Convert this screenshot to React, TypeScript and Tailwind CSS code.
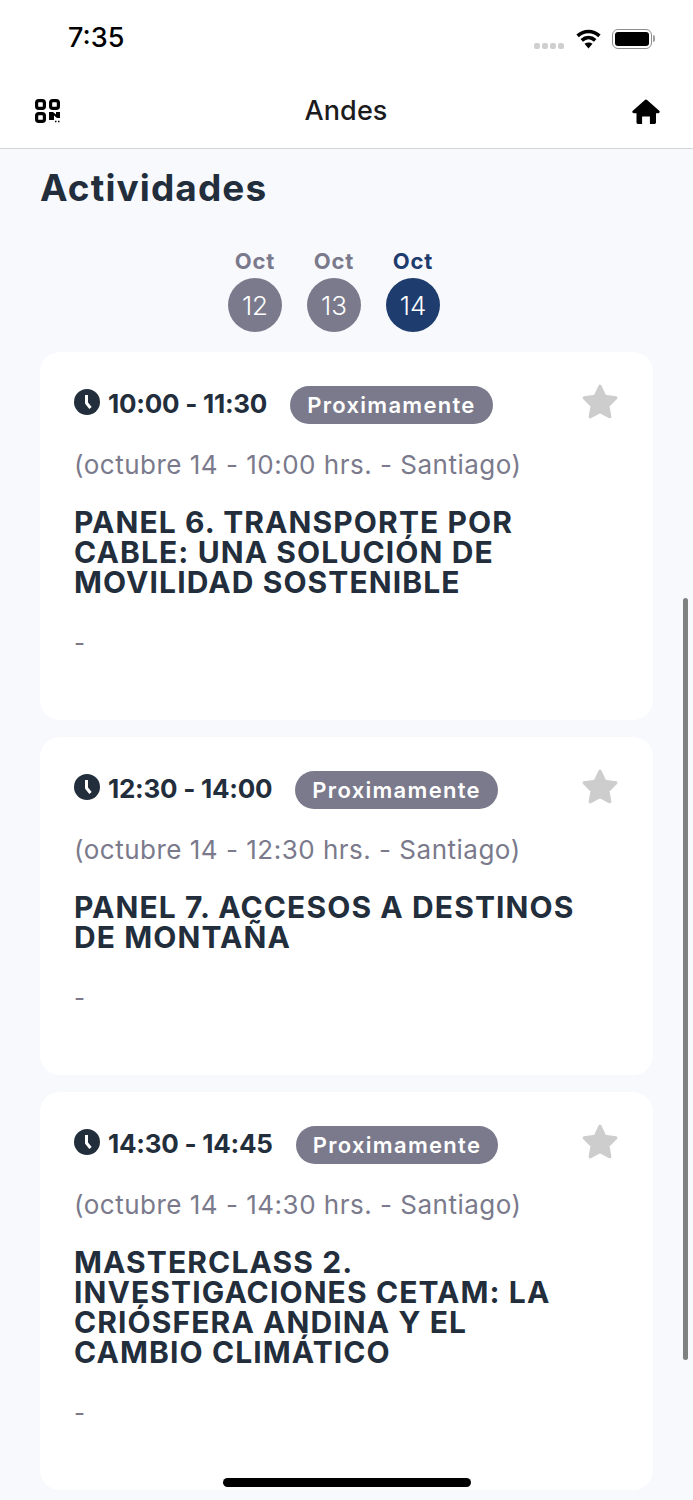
import React from 'react';

const FONT = "font-['Inter','Liberation_Sans',sans-serif]";

const days = [
  { day: '12', active: false },
  { day: '13', active: false },
  { day: '14', active: true },
];

const activities = [
  {
    time: '10:00 - 11:30',
    local: '(octubre 14 - 10:00 hrs. - Santiago)',
    title: ['PANEL 6. TRANSPORTE POR', 'CABLE: UNA SOLUCIÓN DE', 'MOVILIDAD SOSTENIBLE'],
  },
  {
    time: '12:30 - 14:00',
    local: '(octubre 14 - 12:30 hrs. - Santiago)',
    title: ['PANEL 7. ACCESOS A DESTINOS', 'DE MONTAÑA'],
  },
  {
    time: '14:30 - 14:45',
    local: '(octubre 14 - 14:30 hrs. - Santiago)',
    title: ['MASTERCLASS 2.', 'INVESTIGACIONES CETAM: LA', 'CRIÓSFERA ANDINA Y EL', 'CAMBIO CLIMÁTICO'],
  },
];

function Wifi() {
  return (
    <svg width="27" height="20" viewBox="0 0 28 22" fill="none" stroke="#000" strokeWidth="4">
      <path d="M2 7.500C9 1.200 19 1.200 26 7.500" />
      <path d="M6.600 12.500C11 8.500 17 8.500 21.400 12.500" />
      <path d="M14 21.500l-4.400-5.200c2.600-2 6.200-2 8.800 0z" fill="#000" stroke="none" />
    </svg>
  );
}

function Battery() {
  return (
    <div className="flex items-center gap-[1px]">
      <div className="h-[20px] w-[40px] rounded-[6px] border-[1.5px] border-[#8e8e8e] p-[2px]">
        <div className="h-full w-full rounded-[3px] bg-black" />
      </div>
      <div className="h-[7px] w-[2px] rounded-r-full bg-[#a0a0a0]" />
    </div>
  );
}

function QrIcon() {
  return (
    <svg width="25" height="24" viewBox="0 0 25 24" fill="none">
      <rect x="1.600" y="1.600" width="7.800" height="7.800" rx="2.200" stroke="#000" strokeWidth="3.200" />
      <rect x="15.600" y="1.600" width="7.800" height="7.800" rx="2.200" stroke="#000" strokeWidth="3.200" />
      <rect x="1.600" y="14.600" width="7.800" height="7.800" rx="2.200" stroke="#000" strokeWidth="3.200" />
      <path d="M14 13h4l3 2.500V13h4v6h-3l-3-2.500V21h-5z" fill="#000" />
      <path d="M20 22.500h1.500M23 22.500h1.500" stroke="#000" strokeWidth="1.500" />
    </svg>
  );
}

function HomeIcon() {
  return (
    <svg width="28" height="25" viewBox="0 0 28 25">
      <path
        d="M14 .6c.5 0 1 .2 1.400.6l11.800 10.600c1 .9.400 2.400-.9 2.400h-2.300v9.300c0 .8-.6 1.400-1.400 1.400h-4.700v-7.500h-7.800v7.500H5.900c-.8 0-1.400-.6-1.400-1.400v-9.300H1.700c-1.300 0-1.900-1.500-.9-2.400L12.600 1.200c.4-.4.900-.6 1.400-.6z"
        fill="#000"
      />
    </svg>
  );
}

function ClockIcon() {
  return (
    <svg width="26" height="26" viewBox="0 0 26 26" className="mb-[6px] shrink-0">
      <circle cx="13" cy="13" r="13" fill="#232e3c" />
      <path d="M12.500 6v8l4 5" fill="none" stroke="#fff" strokeWidth="3" strokeLinejoin="round" />
    </svg>
  );
}

function Star() {
  return (
    <svg width="38" height="36" viewBox="0 0 36 34">
      <path
        d="M18 3l4.600 9.600 10.400 1.500-7.500 7.400 1.800 10.400L18 27l-9.300 4.900 1.800-10.400L3 14.100l10.400-1.500z"
        fill="#cdcdcd"
        stroke="#cdcdcd"
        strokeWidth="3"
        strokeLinejoin="round"
      />
    </svg>
  );
}

export default function App() {
  return (
    <div className={`relative h-[1500px] overflow-hidden bg-[#f8f9fd] ${FONT}`}>
      <header className="h-[149px] border-b border-[#d4d4d6] bg-white">
        <div className="flex h-[76px] items-center justify-between pl-[68px] pr-[38px] pt-[1px]">
          <span className="text-[27px] font-medium text-black">7:35</span>
          <div className="flex items-center gap-[11px]">
            <div className="mt-[14px] flex gap-[2px]">
              <span className="h-[6px] w-[6px] rounded-[2px] bg-[#cfcfcf]" />
              <span className="h-[6px] w-[6px] rounded-[2px] bg-[#cfcfcf]" />
              <span className="h-[6px] w-[6px] rounded-[2px] bg-[#cfcfcf]" />
              <span className="h-[6px] w-[6px] rounded-[2px] bg-[#cfcfcf]" />
            </div>
            <span className="-mr-[1px]">
              <Wifi />
            </span>
            <Battery />
          </div>
        </div>
        <div className="flex h-[70px] items-center justify-between pl-[35px] pr-[33px]">
          <QrIcon />
          <span className="text-[27px] font-medium tracking-[0.1px] text-[#1c1c1e]">Andes</span>
          <HomeIcon />
        </div>
      </header>

      <main className="px-10">
        <h1 className="mt-[16px] text-[37px] font-bold leading-[46px] tracking-[1.1px] text-[#232e3c]">Actividades</h1>
        <div className="mt-[35px] flex justify-center gap-[25px] pr-[25px]">
          {days.map((d) => (
            <div key={d.day} className="flex flex-col items-center">
              <span className={`text-[22px] font-bold leading-[30px] tracking-[0.8px] ${d.active ? 'text-[#1e3c6e]' : 'text-[#7a7a8c]'}`}>Oct</span>
              <span
                className={`mt-[2px] flex h-[54px] w-[54px] items-center justify-center rounded-full text-[26px] font-light text-white ${
                  d.active ? 'bg-[#1e3c6e]' : 'bg-[#7a7a8c]'
                }`}
              >
                {d.day}
              </span>
            </div>
          ))}
        </div>

        <div className="mt-[20px] flex flex-col gap-[17px]">
          {activities.map((a) => (
            <article key={a.time} className="rounded-[20px] bg-white px-[34px] pb-[62px] pt-[34px]">
              <div className="flex h-[38px] items-center">
                <ClockIcon />
                <span className="mb-[3px] ml-[8px] text-[26px] font-bold tracking-[-0.25px] text-[#232e3c]">{a.time}</span>
                <span className="ml-[23px] flex h-[38px] items-center rounded-full bg-[#7a7a8c] px-[17px] text-[22px] font-semibold tracking-[1.3px] text-white">
                  Proximamente
                </span>
                <span className="mb-[8px] ml-auto">
                  <Star />
                </span>
              </div>
              <p className="mt-[23px] text-[26px] leading-[36px] tracking-[0.5px] text-[#7a7a8c]">{a.local}</p>
              <h2 className="mt-[24px] text-[30px] font-bold leading-[30px] tracking-[1.1px] text-[#232e3c]">
                {a.title.map((line) => (
                  <span key={line} className="block whitespace-nowrap">
                    {line}
                  </span>
                ))}
              </h2>
              <p className="mt-[31px] text-[24px] leading-[30px] text-[#7a7a8c]">-</p>
            </article>
          ))}
        </div>
      </main>

      <div className="absolute left-[683px] top-[598px] h-[762px] w-[5px] rounded-full bg-[#808080]" />
      <div className="absolute left-[223px] top-[1478px] h-[9px] w-[248px] rounded-full bg-black" />
    </div>
  );
}
